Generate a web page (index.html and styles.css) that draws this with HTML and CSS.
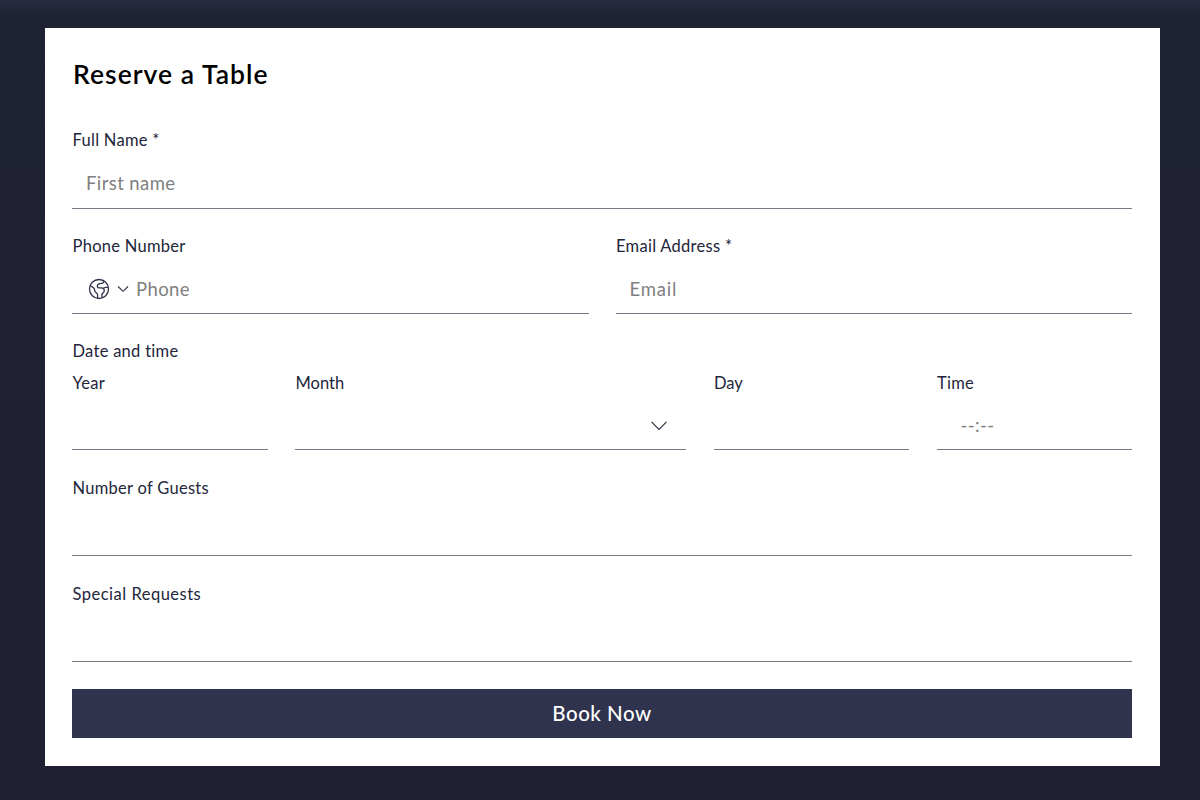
FILE: index.html
```
<!DOCTYPE html>
<html lang="en">
<head>
  <meta charset="UTF-8">
  <meta name="viewport" content="width=device-width, initial-scale=1.0">
  <title>Reserve a Table</title>
  <link rel="stylesheet" href="styles.css">
</head>
<body>
  <form class="reservation">
    <h1>Reserve a Table</h1>
    <div class="field field-name">
      <label for="name">Full Name *</label>
      <input type="text" id="name" placeholder="First name">
    </div>
    <div class="row">
      <div class="field">
        <label for="phone">Phone Number</label>
        <div class="phone-box">
          <svg class="globe" viewBox="0 0 22 22">
            <circle cx="11" cy="11" r="9.5"/>
            <path d="M2 7.5 L5.3 9.6 Q6.6 10.5 6.6 12 Q6.7 13.8 8.2 14.7 Q9.6 15.6 9.6 17.2 V20.3"/>
            <path d="M15.6 2.8 Q15.9 5.2 13.6 5.4 Q9.3 5.7 9.3 8.1 Q9.4 10.2 12.3 9.9 Q16 9.5 16.3 12 Q16.5 14.2 14.8 15.1 Q13.2 16 14.2 19.8"/>
            <path d="M20.2 9.3 H17.8 Q16.2 9.4 15.2 10.4"/>
          </svg>
          <svg class="arrow-small" viewBox="0 0 12 8">
            <path d="M1 1.5 L6 6.3 L11 1.5"/>
          </svg>
          <input type="tel" id="phone" placeholder="Phone">
        </div>
      </div>
      <div class="field">
        <label for="email">Email Address *</label>
        <input type="email" id="email" class="input-email" placeholder="Email">
      </div>
    </div>
    <div class="date-time">
      <div class="group-label">Date and time</div>
      <div class="date-row">
        <div class="field">
          <label for="year">Year</label>
          <input type="text" id="year">
        </div>
        <div class="field">
          <label class="label-month">Month</label>
          <div class="month-box">
            <svg class="arrow" viewBox="0 0 18 12">
              <path d="M1.5 1.8 L9 9.3 L16.5 1.8"/>
            </svg>
          </div>
        </div>
        <div class="field">
          <label for="day" class="label-day">Day</label>
          <input type="text" id="day">
        </div>
        <div class="field">
          <label for="time">Time</label>
          <input type="text" id="time" class="input-time" placeholder="--:--">
        </div>
      </div>
    </div>
    <div class="field field-guests">
      <label for="guests">Number of Guests</label>
      <input type="text" id="guests">
    </div>
    <div class="field field-requests">
      <label for="requests" class="label-requests">Special Requests</label>
      <input type="text" id="requests">
    </div>
    <button type="button" class="book-button">Book Now</button>
  </form>
</body>
</html>
```
FILE: styles.css
```
* {
  box-sizing: border-box;
}
body {
  margin: 0;
  height: 800px;
  padding: 28px 40.5px 34px 45px;
  overflow: hidden;
  font-family: Lato, "Open Sans", sans-serif;
  background: linear-gradient(#2a2d41 0, #1f2233 14px, #1f2132 100%);
}
.reservation {
  height: 738px;
  padding: 30px 27.5px 28px 27px;
  background-color: #fff;
}
h1 {
  margin: 0 0 40px;
  padding-left: 1px;
  height: 32px;
  line-height: 32px;
  font-size: 26.5px;
  font-weight: 600;
  letter-spacing: 1.02px;
  color: #000;
}
.field {
  display: flex;
  flex-direction: column;
  height: 78px;
}
.field-name {
  height: 79px;
}
label, .group-label {
  display: block;
  height: 20px;
  line-height: 20px;
  padding-left: 0.5px;
  font-size: 16.5px;
  letter-spacing: 0.28px;
  color: #23263b;
}
.label-month, .label-day {
  letter-spacing: 0;
}
.label-requests {
  letter-spacing: 0.5px;
}
input, .phone-box, .month-box {
  flex: 1;
  width: 100%;
  min-height: 0;
  margin: 0;
  padding: 8px 14px 0;
  border: none;
  border-bottom: 1px solid #777986;
  border-radius: 0;
  outline: none;
  background: transparent;
  font-family: inherit;
  font-size: 18.5px;
  letter-spacing: 0.4px;
  color: #23263b;
}
input::placeholder {
  color: #808080;
  opacity: 1;
}
.row {
  display: grid;
  grid-template-columns: 1fr 1fr;
  gap: 27px;
  margin: 27px 0;
}
.phone-box {
  display: flex;
  align-items: center;
  padding-left: 16px;
}
.phone-box input {
  height: 100%;
  padding: 0;
  border: none;
}
.input-email {
  letter-spacing: 0.8px;
}
svg {
  display: block;
  flex: none;
  fill: none;
  stroke: #30334a;
}
.globe {
  width: 22px;
  height: 22px;
  stroke-width: 1.3;
}
.arrow-small {
  width: 12px;
  height: 8px;
  margin: 1px 7.5px 0 6.5px;
  stroke-width: 1.1;
}
.date-row {
  display: grid;
  grid-template-columns: 1fr 2fr 1fr 1fr;
  gap: 27.5px;
  margin-top: 12px;
}
.date-row .field {
  height: 77px;
}
.month-box {
  display: flex;
  align-items: center;
  justify-content: flex-end;
  padding-top: 10px;
  padding-right: 18.5px;
}
.arrow {
  width: 18px;
  height: 12px;
  stroke-width: 1.2;
}
.input-time {
  padding-left: 24px;
}
.field-guests, .field-requests {
  margin-top: 28px;
}
.book-button {
  display: block;
  width: 100%;
  height: 49px;
  margin: 27px 0 0;
  padding: 0 0 2px;
  border: none;
  background-color: #2f334e;
  color: #fff;
  font-family: inherit;
  font-size: 20.5px;
  font-weight: 500;
  letter-spacing: 0.5px;
  cursor: pointer;
}
```
